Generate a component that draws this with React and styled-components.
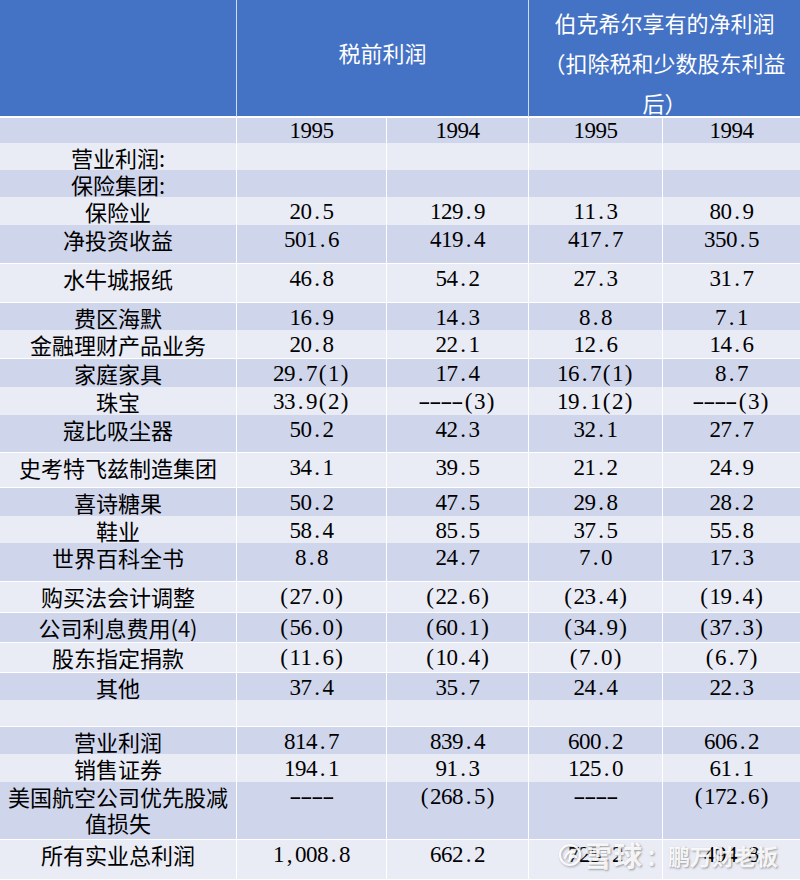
import React from 'react';
import styled, { createGlobalStyle } from 'styled-components';

const GlobalStyle = createGlobalStyle`
    body {
        margin: 0;
        background: #fff;
    }
`;

const CJK = `"Noto Sans CJK SC", "Noto Sans", sans-serif`;
const COLS = '237px 150px 142px 134px 137px';

const Sheet = styled.div`
    width: 800px;
    height: 880px;
    display: flex;
    flex-direction: column;
    position: relative;
    overflow: hidden;
`;

const HeadRow = styled.div`
    display: grid;
    grid-template-columns: 237px 292px 271px;
    height: 118px;
    background-color: #4472c4;
`;

const HeadCell = styled.div`
    box-sizing: border-box;
    height: 118px;
    padding-top: ${p => p.$top}px;
    border-right: 1px solid rgba(255, 255, 255, 0.75);
    border-bottom: 2px solid #fff;
    color: #fff;
    font-family: ${CJK};
    font-size: 22px;
    line-height: 40px;
    text-align: center;
    white-space: nowrap;
    &:last-child {
        border-right: none;
    }
`;

const Row = styled.div`
    display: grid;
    grid-template-columns: ${COLS};
    height: ${p => p.$h}px;
    background-color: ${p => (p.$dark ? '#cfd5ea' : '#e9ebf5')};
`;

const Cell = styled.div`
    box-sizing: border-box;
    border-right: 1px solid #fff;
    border-bottom: 1px solid #fff;
    text-align: center;
    line-height: 26px;
    color: #000;
    &:last-child {
        border-right: none;
    }
`;

const Label = styled(Cell)`
    padding: 1px 7px 0;
    font-family: ${CJK};
    font-size: 22px;
`;

const Value = styled(Cell)`
    padding-top: ${p => (p.$year ? 0 : 2)}px;
    font-family: "Liberation Serif", "Times New Roman", serif;
    font-size: 23px;
    white-space: nowrap;
`;

const Glyph = styled.span`
    display: inline-block;
    width: 11px;
    text-align: center;
    transform: ${p => (p.$dash ? 'scaleX(1.6)' : 'none')};
`;

const Watermark = styled.div`
    position: absolute;
    right: 22px;
    bottom: 11px;
    height: 28px;
    display: flex;
    align-items: center;
    gap: 2px;
    color: rgba(255, 255, 255, 0.9);
    font-family: ${CJK};
    font-weight: 700;
    font-size: 22px;
    text-shadow: 1px 1px 2px rgba(60, 60, 60, 0.45);
    white-space: nowrap;
`;

const Brand = styled.span`
    font-size: 28px;
    letter-spacing: 2px;
`;

const Logo = () => (
    <svg width="24" height="24" viewBox="0 0 24 24" fill="none"
        style={{ filter: 'drop-shadow(1px 1px 1px rgba(60,60,60,0.45))' }}>
        <circle cx="12" cy="12" r="10" stroke="rgba(255,255,255,0.9)" strokeWidth="2.2" />
        <path d="M7 15c1-5 6-8 10-6-3 0-5 2-5 5 2-2 5-2 6 0-3-1-6 1-7 4"
            stroke="rgba(255,255,255,0.9)" strokeWidth="2" strokeLinecap="round" />
    </svg>
);

const Num = ({ text }) => (
    <>
        {[...text].map((ch, i) => (
            <Glyph key={i} $dash={ch === '-'}>{ch}</Glyph>
        ))}
    </>
);

const rows = [
    { h: 27, label: '营业利润:', v: [] },
    { h: 27, label: '保险集团:', v: [] },
    { h: 28, label: '保险业', v: ['20.5', '129.9', '11.3', '80.9'] },
    { h: 39, label: '净投资收益', v: ['501.6', '419.4', '417.7', '350.5'] },
    { h: 39, label: '水牛城报纸', v: ['46.8', '54.2', '27.3', '31.7'] },
    { h: 27, label: '费区海默', v: ['16.9', '14.3', '8.8', '7.1'] },
    { h: 29, label: '金融理财产品业务', v: ['20.8', '22.1', '12.6', '14.6'] },
    { h: 28, label: '家庭家具', v: ['29.7(1)', '17.4', '16.7(1)', '8.7'] },
    { h: 28, label: '珠宝', v: ['33.9(2)', '----(3)', '19.1(2)', '----(3)'] },
    { h: 38, label: '寇比吸尘器', v: ['50.2', '42.3', '32.1', '27.7'] },
    { h: 35, label: '史考特飞兹制造集团', v: ['34.1', '39.5', '21.2', '24.9'] },
    { h: 28, label: '喜诗糖果', v: ['50.2', '47.5', '29.8', '28.2'] },
    { h: 27, label: '鞋业', v: ['58.4', '85.5', '37.5', '55.8'] },
    { h: 39, label: '世界百科全书', v: ['8.8', '24.7', '7.0', '17.3'] },
    { h: 31, label: '购买法会计调整', v: ['(27.0)', '(22.6)', '(23.4)', '(19.4)'] },
    { h: 30, label: '公司利息费用(4)', v: ['(56.0)', '(60.1)', '(34.9)', '(37.3)'] },
    { h: 30, label: '股东指定捐款', v: ['(11.6)', '(10.4)', '(7.0)', '(6.7)'] },
    { h: 27, label: '其他', v: ['37.4', '35.7', '24.4', '22.3'] },
    { h: 27, label: '', v: [] },
    { h: 27, label: '营业利润', v: ['814.7', '839.4', '600.2', '606.2'] },
    { h: 28, label: '销售证券', v: ['194.1', '91.3', '125.0', '61.1'] },
    { h: 58, label: '美国航空公司优先股减值损失', v: ['----', '(268.5)', '----', '(172.6)'] },
    { h: 40, label: '所有实业总利润', v: ['1,008.8', '662.2', '725.2', '494.8'] },
];

export default function App() {
    return (
        <>
            <GlobalStyle />
            <Sheet>
                <HeadRow>
                    <HeadCell $top={0} />
                    <HeadCell $top={32}>税前利润</HeadCell>
                    <HeadCell $top={2}>
                        伯克希尔享有的净利润<br />
                        （扣除税和少数股东利益<br />
                        后）
                    </HeadCell>
                </HeadRow>

                <Row $h={25} $dark>
                    <Label />
                    {['1995', '1994', '1995', '1994'].map((y, i) => (
                        <Value key={i} $year><Num text={y} /></Value>
                    ))}
                </Row>

                {rows.map((r, i) => (
                    <Row key={i} $h={r.h} $dark={i % 2 === 1}>
                        <Label>{r.label}</Label>
                        {[0, 1, 2, 3].map(j => (
                            <Value key={j}>{r.v[j] && <Num text={r.v[j]} />}</Value>
                        ))}
                    </Row>
                ))}

                <Watermark>
                    <Logo />
                    <Brand>雪球</Brand>
                    <span>：鹏万财老板</span>
                </Watermark>
            </Sheet>
        </>
    );
}
